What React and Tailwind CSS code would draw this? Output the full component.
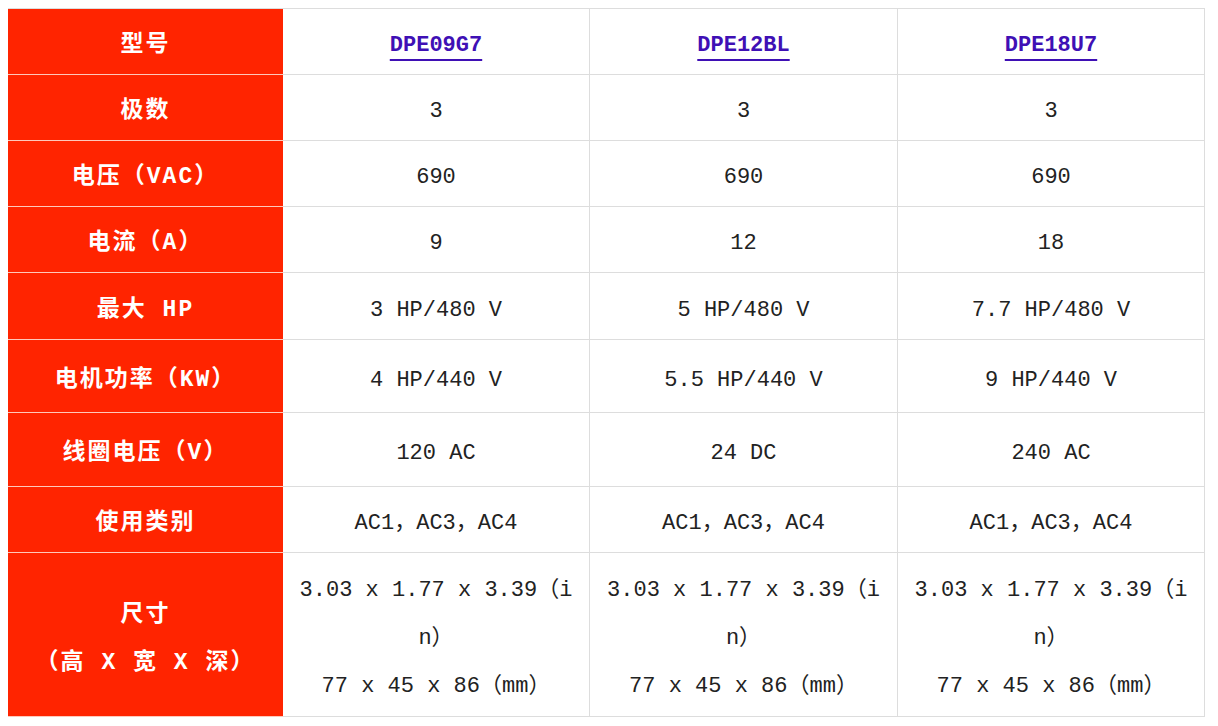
import React from "react";

const models = ["DPE09G7", "DPE12BL", "DPE18U7"];

const rows = [
  { label: ["极数"], values: ["3", "3", "3"], h: "h-[66px]" },
  { label: ["电压（VAC）"], values: ["690", "690", "690"], h: "h-[66px]" },
  { label: ["电流（A）"], values: ["9", "12", "18"], h: "h-[66px]" },
  { label: ["最大 HP"], values: ["3 HP/480 V", "5 HP/480 V", "7.7 HP/480 V"], h: "h-[67px]" },
  { label: ["电机功率（KW）"], values: ["4 HP/440 V", "5.5 HP/440 V", "9 HP/440 V"], h: "h-[73px]" },
  { label: ["线圈电压（V）"], values: ["120 AC", "24 DC", "240 AC"], h: "h-[74px]" },
  { label: ["使用类别"], values: ["AC1，AC3，AC4", "AC1，AC3，AC4", "AC1，AC3，AC4"], h: "h-[66px]" },
];

const size = ["3.03 x 1.77 x 3.39（in）", "77 x 45 x 86（mm）"];

const labelCls =
  "bg-[#ff2400] text-white font-bold text-[23px] tracking-[2px] border-b border-[#ffc8bb] flex flex-col items-center justify-center text-center pt-2";
const cellCls =
  "border-b border-r border-[#dddddd] text-[#222] text-[22px] flex flex-col items-center justify-center text-center px-3 pt-2 break-all";

export default function App() {
  return (
    <div className="bg-white min-h-[726px] p-2 font-['Liberation_Mono','Noto_Sans_CJK_SC',monospace]">
      <div className="grid grid-cols-[275px_307px_308px_307px] border-t border-[#dddddd] w-[1197px]">
        <div className={`${labelCls} h-[66px]`}>型号</div>
        {models.map((m) => (
          <div key={m} className={`${cellCls} h-[66px]`}>
            <a
              href="#"
              className="font-bold text-[#3f10b5] underline decoration-2 underline-offset-[8px]"
            >
              {m}
            </a>
          </div>
        ))}

        {rows.map((r, i) => (
          <React.Fragment key={i}>
            <div className={`${labelCls} ${r.h}`}>
              {r.label.map((l) => (
                <span key={l}>{l}</span>
              ))}
            </div>
            {r.values.map((v, j) => (
              <div key={j} className={`${cellCls} ${r.h}`}>
                {v}
              </div>
            ))}
          </React.Fragment>
        ))}

        <div className={`${labelCls} h-[164px] leading-[48px]`}>
          <span>尺寸</span>
          <span>（高 X 宽 X 深）</span>
        </div>
        {[0, 1, 2].map((j) => (
          <div key={j} className={`${cellCls} h-[164px] leading-[48px]`}>
            {size.map((s) => (
              <span key={s} className="block w-full">
                {s}
              </span>
            ))}
          </div>
        ))}
      </div>
    </div>
  );
}
